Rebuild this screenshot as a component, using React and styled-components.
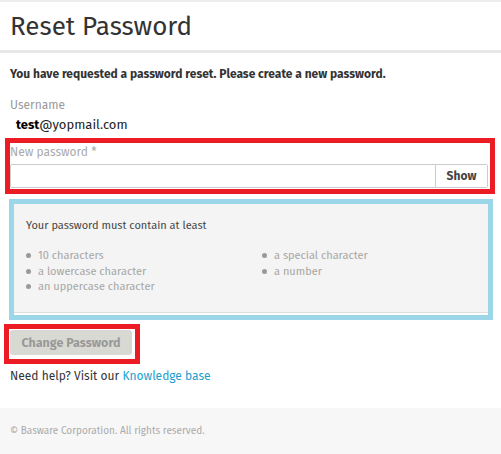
import React from "react";
import styled, { createGlobalStyle } from "styled-components";

const Global = createGlobalStyle`
  html, body { margin: 0; padding: 0; background: #fff; }
  body { font-family: "Fira Sans", Lato, "Noto Sans", sans-serif; color: #333; }
  * { box-sizing: border-box; }
`;

const Page = styled.div`
  width: 501px;
  height: 454px;
  display: flex;
  flex-direction: column;
  border-top: 2px solid #ededed;
`;

const Header = styled.header`
  height: 51px;
  padding: 10px 10px 0;
  border-bottom: 3px solid #e8e8e8;
`;

const Title = styled.h1`
  margin: 0;
  font-size: 26px;
  font-weight: 400;
  line-height: 30px;
  color: #333;
`;

const Main = styled.main`
  flex: 1;
  display: flex;
  flex-direction: column;
`;

const Intro = styled.p`
  margin: 13px 0 0 10px;
  font-size: 12px;
  font-weight: 700;
  line-height: 16px;
  color: #333;
`;

const Label = styled.div`
  font-size: 12px;
  line-height: 15px;
  color: ${(p) => p.$color || "#999"};
`;

const UserBlock = styled.div`
  margin: 16px 0 0 10px;
`;

const UserValue = styled.div`
  margin-top: 4px;
  padding-left: 6px;
  font-size: 13px;
  line-height: 16px;
  color: #222;
  b { color: #000; }
`;

const Highlight = styled.div`
  border: 5px solid ${(p) => p.$color};
  background: #fff;
`;

const FieldGroup = styled(Highlight)`
  margin: 5px 6px 0 5px;
  padding: 2px 2px 1px 0;
`;

const InputRow = styled.div`
  display: flex;
  height: 24px;
  margin-top: 4px;
  border: 1px solid #ccc;
  border-radius: 2px;
  background: #fff;
`;

const Input = styled.input`
  flex: 1;
  border: 0;
  outline: none;
  background: transparent;
  padding: 0 6px;
  font: inherit;
`;

const ShowButton = styled.button`
  width: 52px;
  border: 0;
  border-left: 1px solid #ccc;
  background: #fff;
  font-family: inherit;
  font-size: 12px;
  font-weight: 700;
  color: #444;
  padding: 0;
`;

const RulesBox = styled(Highlight)`
  margin: 5px 8px 0 9px;
  padding-bottom: 2px;
`;

const RulesPanel = styled.div`
  background: #f4f4f4;
  border-bottom: 1px solid #dcdcdc;
  padding: 15px 12px 17px;
`;

const RulesTitle = styled.div`
  font-size: 11px;
  line-height: 14px;
  color: #444;
`;

const RulesGrid = styled.ul`
  list-style: none;
  margin: 15px 0 0;
  padding: 0;
  display: grid;
  grid-template-columns: 236px 1fr;
  grid-auto-flow: column;
  grid-template-rows: repeat(3, 15.5px);
`;

const Rule = styled.li`
  display: flex;
  align-items: center;
  gap: 7px;
  font-size: 11px;
  color: #a6a6a6;
  &::before {
    content: "";
    width: 5px;
    height: 5px;
    border-radius: 50%;
    background: #999;
  }
`;

const ButtonBox = styled(Highlight)`
  align-self: flex-start;
  margin: 4px 0 0 4px;
  padding: 1px 3px 4px 1px;
`;

const SubmitButton = styled.button`
  display: block;
  width: 122px;
  height: 25px;
  border: 0;
  border-radius: 3px;
  background: #d9d9d4;
  color: #999;
  font-family: inherit;
  font-size: 12.5px;
  font-weight: 700;
  padding: 0;
`;

const Help = styled.p`
  margin: 4px 0 0 10px;
  font-size: 12px;
  line-height: 16px;
  color: #333;
  a { color: #1a9fcf; text-decoration: none; }
`;

const Footer = styled.footer`
  height: 46px;
  background: #f7f7f7;
  padding: 17px 10px 0;
  font-size: 10px;
  color: #aaa;
`;

const firstCol = ["10 characters", "a lowercase character", "an uppercase character"];
const secondCol = ["a special character", "a number"];

export default function App() {
  return (
    <>
      <Global />
      <Page>
        <Header>
          <Title>Reset Password</Title>
        </Header>
        <Main>
          <Intro>You have requested a password reset. Please create a new password.</Intro>
          <UserBlock>
            <Label>Username</Label>
            <UserValue><b>test</b>@yopmail.com</UserValue>
          </UserBlock>
          <FieldGroup $color="#ec1c24">
            <Label $color="#aaa">New password *</Label>
            <InputRow>
              <Input type="password" aria-label="New password" />
              <ShowButton type="button">Show</ShowButton>
            </InputRow>
          </FieldGroup>
          <RulesBox $color="#9bd7e8">
            <RulesPanel>
              <RulesTitle>Your password must contain at least</RulesTitle>
              <RulesGrid>
                {firstCol.map((r) => <Rule key={r}>{r}</Rule>)}
                {secondCol.map((r) => <Rule key={r}>{r}</Rule>)}
              </RulesGrid>
            </RulesPanel>
          </RulesBox>
          <ButtonBox $color="#ec1c24">
            <SubmitButton type="button" disabled>Change Password</SubmitButton>
          </ButtonBox>
          <Help>Need help? Visit our <a href="#">Knowledge base</a></Help>
        </Main>
        <Footer>© Basware Corporation. All rights reserved.</Footer>
      </Page>
    </>
  );
}
